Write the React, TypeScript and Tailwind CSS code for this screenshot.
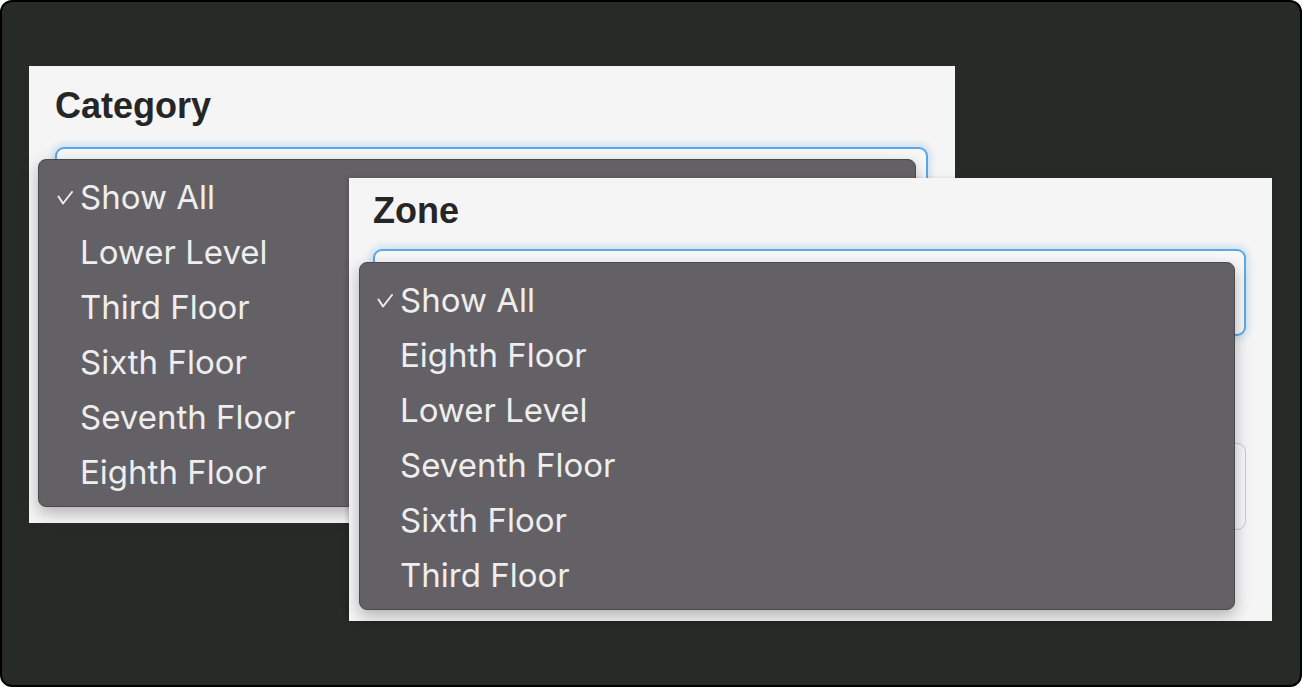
import React from "react";

const categoryOptions = ["Show All", "Lower Level", "Third Floor", "Sixth Floor", "Seventh Floor", "Eighth Floor"];
const zoneOptions = ["Show All", "Eighth Floor", "Lower Level", "Seventh Floor", "Sixth Floor", "Third Floor"];

const Check = () => (
  <svg width="16" height="14" viewBox="0 0 16 14" fill="none" stroke="#ececec" strokeWidth="2" strokeLinecap="round" strokeLinejoin="round">
    <path d="M1.5 5.5 6 12.5 15 1" />
  </svg>
);

const Menu = ({ options, className }: { options: string[]; className: string }) => (
  <div
    className={`absolute rounded-[8px] border border-[#4c4a4e] bg-[#646166] pt-[10px] pb-[6px] shadow-[0_6px_16px_rgba(0,0,0,0.28)] ${className}`}
  >
    {options.map((opt, i) => (
      <div key={opt} className="flex h-[55px] items-center">
        <span className="flex w-[23px] items-center">{i === 0 && <Check />}</span>
        <span className="text-[33px] text-[#eeeeee]" style={{ fontFamily: "Inter, sans-serif" }}>
          {opt}
        </span>
      </div>
    ))}
  </div>
);

const App = () => {
  return (
    <div className="h-[687px] w-[1302px] bg-white">
      <div className="relative h-full w-full overflow-hidden rounded-[12px] border-2 border-black bg-[#262b28]">
        {/* Category panel */}
        <div className="absolute left-[27px] top-[64px] h-[457px] w-[926px] bg-[#f5f5f5] pl-[26px] pt-[18px]">
          <h2
            className="text-[36px] font-bold leading-[44px] text-[#262626]"
            style={{ fontFamily: "'Liberation Sans', Arial, sans-serif" }}
          >
            Category
          </h2>
          <div className="mt-[19px] h-[87px] w-[873px] rounded-[9px] border-2 border-[#5ba8e8] bg-[#f8f8f8] shadow-[0_0_6px_3px_rgba(91,168,232,0.25)]" />
          <div className="mt-[107px] h-[87px] w-[873px] rounded-[9px] border border-[#c9c9c9] bg-[#f8f8f8]" />
          <Menu options={categoryOptions} className="left-[9px] top-[93px] w-[878px] pl-[18px]" />
        </div>

        {/* Zone panel */}
        <div className="absolute left-[347px] top-[176px] h-[443px] w-[923px] bg-[#f5f5f5] pl-[24px] pt-[11px] shadow-[-2px_0_4px_rgba(0,0,0,0.15)]">
          <h2
            className="text-[36px] font-bold leading-[44px] text-[#262626]"
            style={{ fontFamily: "'Liberation Sans', Arial, sans-serif" }}
          >
            Zone
          </h2>
          <div className="mt-[16px] h-[87px] w-[873px] rounded-[9px] border-2 border-[#5ba8e8] bg-[#f8f8f8] shadow-[0_0_6px_3px_rgba(91,168,232,0.25)]" />
          <div className="mt-[107px] h-[87px] w-[873px] rounded-[9px] border border-[#c9c9c9] bg-[#f8f8f8]" />
          <Menu options={zoneOptions} className="left-[10px] top-[84px] w-[876px] pl-[17px]" />
        </div>
      </div>
    </div>
  );
};

export default App;
